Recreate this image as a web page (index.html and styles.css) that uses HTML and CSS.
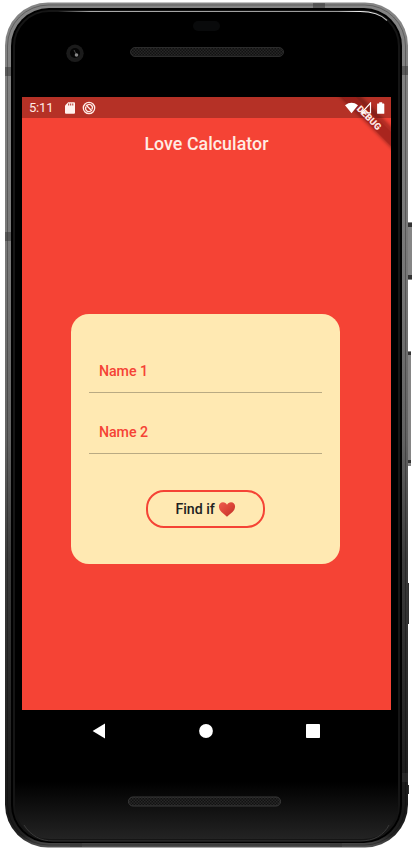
FILE: index.html
```html
<!DOCTYPE html>
<html lang="en">
<head>
<meta charset="utf-8">
<meta name="viewport" content="width=device-width, initial-scale=1">
<title>Love Calculator</title>
<link rel="stylesheet" href="styles.css">
</head>
<body>
<main class="device">
  <svg class="frame" width="412" height="851" viewBox="0 0 412 851" aria-hidden="true">
    <defs>
      <linearGradient id="metal" x1="0" y1="0" x2="0" y2="1">
        <stop offset="0" stop-color="#858585"/><stop offset=".32" stop-color="#777"/><stop offset=".52" stop-color="#626262"/><stop offset=".66" stop-color="#3b3b3b"/><stop offset=".96" stop-color="#181818"/><stop offset=".985" stop-color="#222"/><stop offset="1" stop-color="#555"/>
      </linearGradient>
      <linearGradient id="chin" x1="0" y1="0" x2="0" y2="1">
        <stop offset="0" stop-color="#000"/><stop offset=".93" stop-color="#000"/><stop offset="1" stop-color="#242424"/>
      </linearGradient>
      <linearGradient id="shine" x1="0" y1="0" x2="1" y2="0">
        <stop offset="0" stop-color="#aaa" stop-opacity="0"/><stop offset=".1" stop-color="#aaa"/><stop offset=".85" stop-color="#999"/><stop offset=".93" stop-color="#fff"/><stop offset="1" stop-color="#aaa"/>
      </linearGradient>
      <pattern id="mesh" width="3" height="3" patternUnits="userSpaceOnUse"><path d="M0 0h3v3H0z" fill="#111"/><path d="M0 0h1.5v1.5H0zM1.5 1.5H3V3H1.5z" fill="#272727"/></pattern>
    </defs>
    <path d="M407 222h5v58h-5zM407 351h4v115h-4z" fill="#858585"/>
    <path d="M408 223h4v4h-4zM408 275h4v4h-4zM408 352h3v3h-3zM408 460h3v3h-3z" fill="#333"/>
    <path d="M407 583h2v41h-2zM407 785h2v9h-2z" fill="#303030"/>
    <rect x="5" y="2.5" width="403" height="845" rx="43" fill="url(#metal)"/>
    <rect x="7.5" y="5" width="398" height="840" rx="41" fill="none" stroke="#000" stroke-opacity=".28"/>
    <path d="M5 67h6v9H5zM5 232h6v9H5zM402 66h6v9h-6zM402 773h6v9h-6zM313 3h12v5h-12zM70 842h12v5H70zM330 842h12v5h-12z" fill="#333" fill-opacity=".5"/>
    <rect x="11" y="8" width="391" height="835" rx="38" fill="#000"/>
    <rect x="14" y="11" width="385" height="829" rx="35" fill="url(#chin)" stroke="#151515" stroke-width="2"/>
    <path d="M58 11.5H360c13 0 21 3 27 9" fill="none" stroke="url(#shine)" stroke-width="1.2"/>
    <path d="M24 825c7 11 17 16 29 16h307c14 0 24-6 29-16" fill="none" stroke="#383838" stroke-width="1"/>
    <rect x="193" y="21" width="27" height="10" rx="5" fill="#090a0b"/>
    <circle cx="75" cy="53.3" r="8.7" fill="#1b1b1b"/><circle cx="75" cy="53" r="5" fill="#050505"/><path d="M74 50l2 4" stroke="#444"/><circle cx="76.5" cy="55" r="1.8" fill="#888"/>
    <rect x="130.5" y="47.5" width="153" height="9" rx="4.5" fill="url(#mesh)" stroke="#2c2c2c"/>
    <rect x="128.5" y="797" width="152" height="9" rx="4.5" fill="url(#mesh)" stroke="#3b3b3b"/>
  </svg>
  <section class="screen">
    <header class="status">
      <span class="clock">5:11</span>
      <svg class="sd" width="10" height="12" viewBox="0 0 10 12"><path d="M3.2.2H9q1 0 1 1v9.6q0 1-1 1H1q-1 0-1-1V3.4z" fill="#fff3ee"/><path d="M3.7 1.5v2M5.7 1.5v2M7.8 1.5v2" stroke="#b53126"/></svg>
      <svg class="sync" width="14" height="14" viewBox="0 0 14 14" fill="none" stroke="#ffebe6"><circle cx="7" cy="7" r="5.7" stroke-width="1.3"/><path d="M4.1 5.6A3.2 3.2 0 0 0 8.7 9.9M5.2 4.2A3.2 3.2 0 0 1 9.9 8.4M4 4l6 6" stroke-width="1.3"/></svg>
      <span class="spacer"></span>
      <svg class="signals" width="40" height="14" viewBox="0 0 40 14"><path d="M0 3.2Q6.5-1.5 13 3.2L6.5 11.2z" fill="#fff"/><path d="M25.5 1v9.8h-9z" fill="none" stroke="#fff" stroke-width="1.2"/><path d="M34.2.2h3v1.4h1.5q.6 0 .6.6v9q0 .6-.6.6h-6q-.6 0-.6-.6v-9q0-.6.6-.6h1.5z" fill="#fff"/></svg>
    </header>
    <h1>Love Calculator</h1>
    <form class="card">
      <label class="field">Name 1</label>
      <label class="field">Name 2</label>
      <button type="button">Find if
        <svg width="18" height="15" viewBox="0 0 17 15"><defs><linearGradient id="love" x1="0" y1="0" x2="1" y2="1"><stop stop-color="#ed5b4e"/><stop offset=".5" stop-color="#dc4438"/><stop offset="1" stop-color="#bd3027"/></linearGradient></defs><path d="M8.5 14.7C6.2 12.4.4 9.2.4 4.6.4 2 2.2.3 4.5.3c1.8 0 3.3 1 4 2.5.8-1.5 2.2-2.5 4-2.5 2.4 0 4.1 1.8 4.1 4.3 0 4.6-5.8 7.8-8.1 10.1z" fill="url(#love)"/></svg>
      </button>
    </form>
    <svg class="ribbon" width="64" height="54" viewBox="0 0 64 54"><defs><filter id="soft" x="-20%" y="-20%" width="140%" height="140%"><feGaussianBlur stdDeviation="1.8"/></filter></defs><path d="M9-4h22l39 39v22z" fill="#200" opacity=".32" filter="url(#soft)"/><path d="M15 0h14l35 35v14z" fill="#a51f1b" opacity=".6"/><text x="42" y="24" transform="rotate(45 42 21)" text-anchor="middle">DEBUG</text></svg>
  </section>
  <nav class="keys">
    <svg width="14" height="16" viewBox="0 0 14 16"><path d="M.6 8L13 .6v14.8z" fill="#fff"/></svg>
    <svg width="14" height="14" viewBox="0 0 14 14"><circle cx="7" cy="7" r="6.9" fill="#fff"/></svg>
    <svg width="14" height="14" viewBox="0 0 14 14"><rect width="14" height="14" rx=".8" fill="#fff"/></svg>
  </nav>
</main>
</body>
</html>
```
FILE: styles.css
```css
* { box-sizing: border-box; }
body { margin: 0; background: #fff; font-family: Roboto, sans-serif; overflow: hidden; }
.device { position: relative; width: 412px; height: 851px; padding: 97px 21px 0 22px; }
.frame { position: absolute; inset: 0; }
svg { display: block; }
.screen { position: relative; height: 613px; background: #f54335; overflow: hidden; }
.status { display: flex; align-items: center; height: 21px; padding: 0 6px 0 7px; background: #b53126; }
.clock { width: 36px; font-size: 13px; color: #ffebe6; letter-spacing: -.2px; }
.sync { margin-left: 7px; }
.spacer { flex: 1; }
.signals { position: relative; z-index: 1; margin-top: 2px; }
h1 { margin: 15px 0 0; height: 22px; line-height: 22px; text-align: center; font-size: 17.8px; font-weight: 500; color: #ffece3; letter-spacing: .05px; }
.card { display: flex; flex-direction: column; width: 269px; height: 250px; margin: 159px 0 0 49.4px; padding: 18px 18px 0; border-radius: 18px; background: #ffe9b2; }
.field { height: 61px; padding: 29px 9.5px 0; border-bottom: 1px solid #b9aa83; font-size: 14.2px; line-height: 20px; font-weight: 500; letter-spacing: 0; color: #f54335; }
button { display: flex; align-items: center; justify-content: center; gap: 3.5px; align-self: center; width: 119px; height: 38px; margin-top: 36px; padding: 0; border: 2px solid #f54335; border-radius: 18px; background: transparent; color: #212121; font: 500 14.2px Roboto, sans-serif; letter-spacing: 0; }
.ribbon { position: absolute; top: 0; right: 0; }
.ribbon text { fill: #ffe8e5; font: 900 9.3px Roboto, sans-serif; }
.keys { position: relative; display: flex; align-items: center; justify-content: space-between; height: 42px; padding: 0 71.5px 0 69.5px; }
```
